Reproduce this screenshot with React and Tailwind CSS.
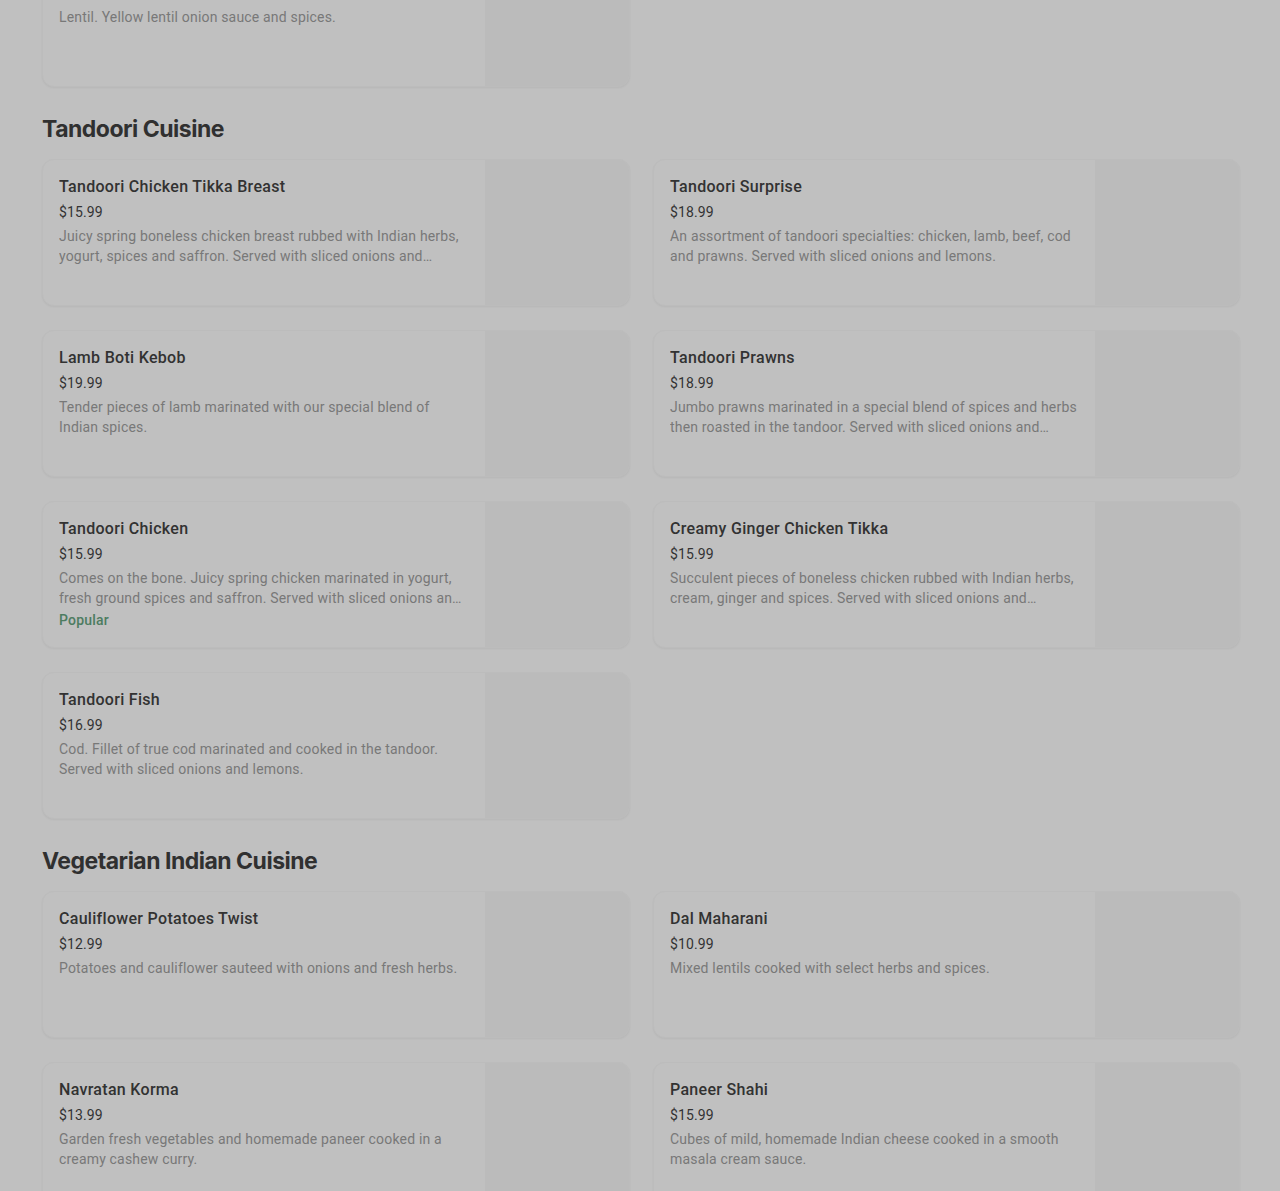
import React from "react";

const sections = [
  {
    title: "Tandoori Cuisine",
    items: [
      { name: "Tandoori Chicken Tikka Breast", price: "$15.99", desc: "Juicy spring boneless chicken breast rubbed with Indian herbs, yogurt, spices and saffron. Served with sliced onions and lemons." },
      { name: "Tandoori Surprise", price: "$18.99", desc: "An assortment of tandoori specialties: chicken, lamb, beef, cod and prawns. Served with sliced onions and lemons." },
      { name: "Lamb Boti Kebob", price: "$19.99", desc: "Tender pieces of lamb marinated with our special blend of Indian spices." },
      { name: "Tandoori Prawns", price: "$18.99", desc: "Jumbo prawns marinated in a special blend of spices and herbs then roasted in the tandoor. Served with sliced onions and lemons." },
      { name: "Tandoori Chicken", price: "$15.99", desc: "Comes on the bone. Juicy spring chicken marinated in yogurt, fresh ground spices and saffron. Served with sliced onions and lemons.", popular: true },
      { name: "Creamy Ginger Chicken Tikka", price: "$15.99", desc: "Succulent pieces of boneless chicken rubbed with Indian herbs, cream, ginger and spices. Served with sliced onions and lemons." },
      { name: "Tandoori Fish", price: "$16.99", desc: "Cod. Fillet of true cod marinated and cooked in the tandoor. Served with sliced onions and lemons." },
    ],
  },
  {
    title: "Vegetarian Indian Cuisine",
    items: [
      { name: "Cauliflower Potatoes Twist", price: "$12.99", desc: "Potatoes and cauliflower sauteed with onions and fresh herbs." },
      { name: "Dal Maharani", price: "$10.99", desc: "Mixed lentils cooked with select herbs and spices." },
      { name: "Navratan Korma", price: "$13.99", desc: "Garden fresh vegetables and homemade paneer cooked in a creamy cashew curry." },
      { name: "Paneer Shahi", price: "$15.99", desc: "Cubes of mild, homemade Indian cheese cooked in a smooth masala cream sauce." },
    ],
  },
];

function Card({ item }) {
  return (
    <div className="flex h-[147px] overflow-hidden rounded-xl border border-[#bcbcbc] bg-[#c0c0c0] shadow-[0_1px_2px_rgba(0,0,0,0.05)]">
      <div className="flex min-w-0 flex-1 flex-col pl-4 pr-4 pt-4">
        <div className="truncate text-[16px] leading-[22px] font-medium tracking-[0.3px] text-[#323232]">{item.name}</div>
        <div className="mt-1 text-[14px] leading-5 tracking-[0.1px] text-[#333333]">{item.price}</div>
        <div className="mt-1 line-clamp-2 text-[14px] leading-5 tracking-[0.18px] text-[#787878]">{item.desc}</div>
        {item.popular && (
          <div className="mt-0.5 text-[14px] leading-5 font-medium tracking-[0.2px] text-[#4d7c60]">Popular</div>
        )}
      </div>
      <div className="h-full w-[144px] shrink-0 bg-[#bbbbbb]"></div>
    </div>
  );
}

export default function App() {
  return (
    <div
      className="h-[1191px] w-full overflow-hidden bg-[#c0c0c0] pl-[42px] pr-[40px]"
      style={{ fontFamily: "Roboto, 'Liberation Sans', sans-serif" }}
    >
      <div className="-mt-[60px] grid grid-cols-[588px_587px] gap-x-[23px]">
        <Card item={{ name: "Dal Tadka", price: "$11.99", desc: "Lentil. Yellow lentil onion sauce and spices." }} />
      </div>
      {sections.map((s) => (
        <div key={s.title} className="mt-[26px]">
          <h2
            className="text-[23px] leading-8 font-bold tracking-[-0.5px] text-[#303030]"
            style={{ fontFamily: "Inter, 'Liberation Sans', sans-serif" }}
          >
            {s.title}
          </h2>
          <div className="mt-[14px] grid grid-cols-[588px_587px] gap-x-[23px] gap-y-6">
            {s.items.map((it) => (
              <Card key={it.name} item={it} />
            ))}
          </div>
        </div>
      ))}
    </div>
  );
}
